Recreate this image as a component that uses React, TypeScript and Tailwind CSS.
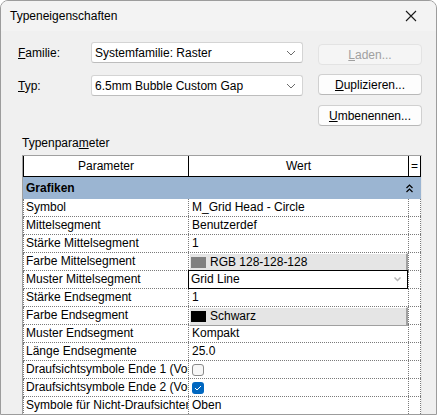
import React from 'react';

type Row = {
  name: string;
  value?: string;
  kind?: 'text' | 'color' | 'select' | 'check';
  swatch?: string;
  checked?: boolean;
};

const rows: Row[] = [
  { name: 'Symbol', value: 'M_Grid Head - Circle' },
  { name: 'Mittelsegment', value: 'Benutzerdef' },
  { name: 'Stärke Mittelsegment', value: '1' },
  { name: 'Farbe Mittelsegment', kind: 'color', swatch: '#808080', value: 'RGB 128-128-128' },
  { name: 'Muster Mittelsegment', kind: 'select', value: 'Grid Line' },
  { name: 'Stärke Endsegment', value: '1' },
  { name: 'Farbe Endsegment', kind: 'color', swatch: '#000000', value: 'Schwarz' },
  { name: 'Muster Endsegment', value: 'Kompakt' },
  { name: 'Länge Endsegmente', value: '25.0' },
  { name: 'Draufsichtsymbole Ende 1 (Voreinstellung)', kind: 'check', checked: false },
  { name: 'Draufsichtsymbole Ende 2 (Voreinstellung)', kind: 'check', checked: true },
  { name: 'Symbole für Nicht-Draufsichten (Voreinstellung)', value: 'Oben' },
];

function Chevron() {
  return (
    <svg width="10" height="6" viewBox="0 0 10 6" fill="none">
      <path d="M1 1l4 4 4-4" stroke="#6b6b6b" strokeWidth="1" />
    </svg>
  );
}

function Combo({ text }: { text: string }) {
  return (
    <div className="w-[212px] h-[21px] bg-white border border-[#d4d4d4] border-b-[#bdbdbd] rounded-[3px] flex items-center justify-between pl-[3px] pr-[6px]">
      <span>{text}</span>
      <Chevron />
    </div>
  );
}

function Btn({ children, disabled }: { children: React.ReactNode; disabled?: boolean }) {
  return (
    <div
      className={
        disabled
          ? 'w-[104px] h-[21px] rounded-[4px] border border-[#e3e3e3] bg-[#f5f5f5] text-[#a0a0a0] flex items-center justify-center'
          : 'w-[104px] h-[21px] rounded-[4px] border border-[#d0d0d0] border-b-[#b8b8b8] bg-[#fdfdfd] flex items-center justify-center'
      }
    >
      {children}
    </div>
  );
}

function ValueCell({ row }: { row: Row }) {
  if (row.kind === 'color') {
    return (
      <div className="h-full bg-[#e5e5e5] border-t border-l border-t-white border-l-white border-r-2 border-b border-r-[#a0a0a0] border-b-[#a0a0a0] flex items-center pl-[1px]">
        <span className="w-[15px] h-[11px] shrink-0" style={{ backgroundColor: row.swatch }} />
        <span className="ml-[4px]">{row.value}</span>
      </div>
    );
  }
  if (row.kind === 'select') {
    return (
      <div className="h-[19px] -mt-[1px] -ml-[1px] bg-white border border-black flex items-center justify-between pl-[2px] pr-[6px]">
        <span>{row.value}</span>
        <svg width="7" height="5" viewBox="0 0 7 5">
          <path d="M0.5 0.5l3 3 3-3" stroke="#b5b5b5" strokeWidth="1.5" fill="none" />
        </svg>
      </div>
    );
  }
  if (row.kind === 'check') {
    return (
      <div className="h-full flex items-center pl-[3px]">
        {row.checked ? (
          <span className="w-[12px] h-[12px] rounded-[3px] bg-[#0067c0] flex items-center justify-center">
            <svg width="8" height="6" viewBox="0 0 8 6" fill="none">
              <path d="M1 3l2 2 4-4" stroke="white" strokeWidth="1" />
            </svg>
          </span>
        ) : (
          <span className="w-[12px] h-[12px] rounded-[3px] border border-[#8a8a8a] bg-[#f7f7f7]" />
        )}
      </div>
    );
  }
  return <div className="h-full flex items-center pl-[3px] whitespace-nowrap overflow-hidden">{row.value}</div>;
}

export default function App() {
  return (
    <div className="w-[437px] h-[415px] overflow-hidden bg-white font-['Liberation_Sans',Arial,sans-serif] text-[12px] text-black">
      <div className="h-full rounded-t-[8px] border border-[#9c9c9c] bg-[#f0f0f0] flex flex-col overflow-hidden">
        {/* Title bar */}
        <div className="h-[30px] shrink-0 bg-[#f3f3f3] flex items-center justify-between pl-[9px] pr-[19px]">
          <span>Typeneigenschaften</span>
          <svg width="12" height="12" viewBox="0 0 12 12" fill="none">
            <path d="M1 1l10 10M11 1L1 11" stroke="#1a1a1a" strokeWidth="1.1" />
          </svg>
        </div>

        <div className="pl-[17px] pt-[11px] flex flex-col">
          <div className="flex items-start h-[22px]">
            <span className="w-[73px] h-[21px] flex items-center">
              <span><u>F</u>amilie:</span>
            </span>
            <Combo text="Systemfamilie: Raster" />
            <div className="ml-[15px] mt-[2px]">
              <Btn disabled>
                <span><u>L</u>aden...</span>
              </Btn>
            </div>
          </div>
          <div className="flex items-start h-[22px] mt-[10px]">
            <span className="w-[73px] h-[21px] mt-[1px] flex items-center">
              <span><u>T</u>yp:</span>
            </span>
            <div className="mt-[1px]">
              <Combo text="6.5mm Bubble Custom Gap" />
            </div>
            <div className="ml-[15px]">
              <Btn>
                <span><u>D</u>uplizieren...</span>
              </Btn>
            </div>
          </div>
          <div className="flex h-[21px] mt-[9px] pl-[300px]">
            <Btn>
              <span><u>U</u>mbenennen...</span>
            </Btn>
          </div>
          <div className="mt-[9px] pl-[4px] leading-[16px] h-[16px]">
            Typenpara<u>m</u>eter
          </div>
        </div>

        {/* Table */}
        <div className="ml-[21px] mt-[4px] w-[400px] flex-1 border-t border-l border-r border-[#a0a0a0] border-r-[#e8e8e8] bg-white flex flex-col">
          <div className="grid grid-cols-[165px_220px_12px] h-[21px] border-b border-black border-l border-l-black">
            <div className="border-r border-black flex items-center justify-center">Parameter</div>
            <div className="border-r border-black flex items-center justify-center">Wert</div>
            <div className="border-r border-black flex items-center justify-center leading-none">=</div>
          </div>
          <div className="h-[22px] bg-[#9bb5d2] flex items-center justify-between pl-[3px] pr-[8px] font-bold">
            <span>Grafiken</span>
            <svg width="7" height="9" viewBox="0 0 7 9" fill="none">
              <path d="M0.5 4l3-3 3 3M0.5 8l3-3 3 3" stroke="#000" strokeWidth="1.2" />
            </svg>
          </div>
          {rows.map((r) => (
            <div
              key={r.name}
              className="grid grid-cols-[165px_220px_12px] h-[18px] border-b border-dotted border-[#7a7a7a] border-l"
            >
              <div className="border-r border-dotted border-[#7a7a7a] pl-[2px] whitespace-nowrap overflow-hidden leading-[17px]">
                {r.name}
              </div>
              <div className="border-r border-dotted border-[#7a7a7a] leading-[17px]">
                <ValueCell row={r} />
              </div>
              <div className="border-r border-dotted border-[#7a7a7a]" />
            </div>
          ))}
        </div>
      </div>
    </div>
  );
}
